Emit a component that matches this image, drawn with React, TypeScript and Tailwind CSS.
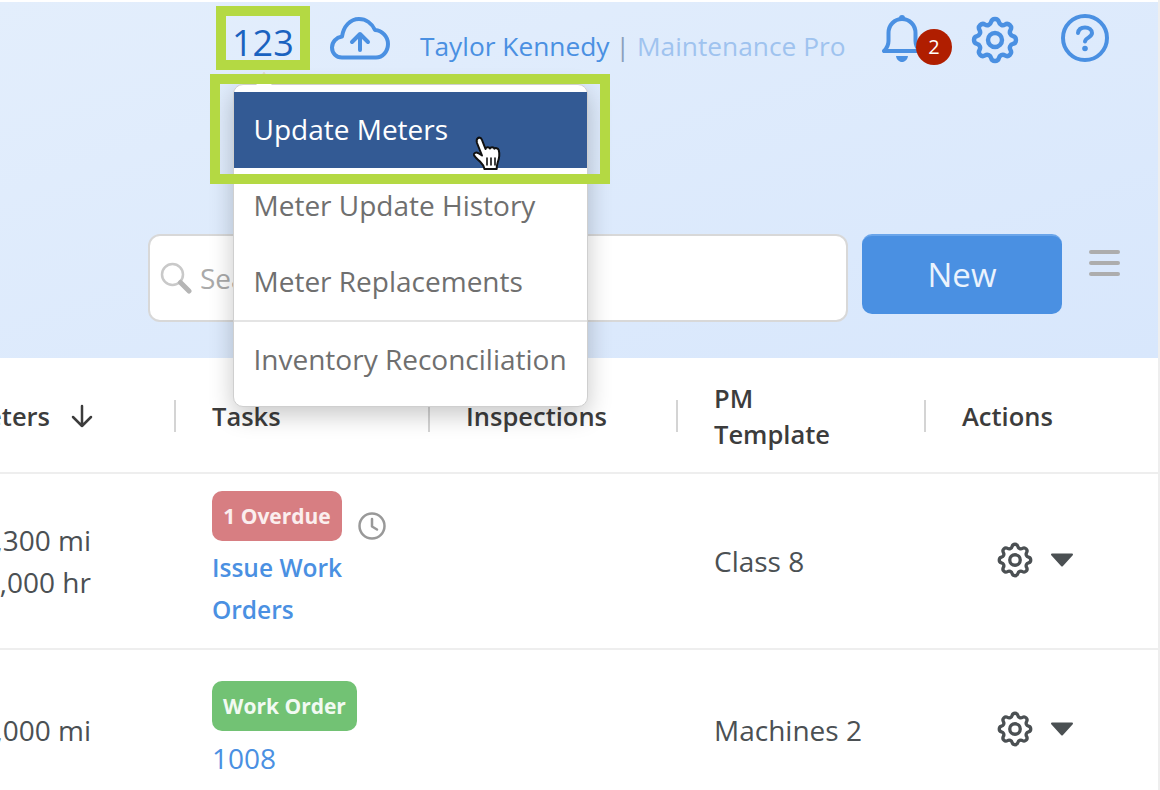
import { TbSettings } from 'react-icons/tb'

const font = { fontFamily: '"Open Sans", sans-serif' }

function CloudIcon() {
  return (
    <svg width="60" height="43" viewBox="0 0 60 43" fill="none" stroke="#4a90e2" strokeWidth="4" strokeLinecap="round" strokeLinejoin="round">
      <path d="M12 40.500C6 40.500 2 36 2 30.500 2 25 6 20.500 12 19.500 13.500 9.500 20 2 29 2c7 0 13 4.500 16 11 7 .5 13 6.500 13 14 0 7.500-5.500 13.500-12 13.500z" />
      <path d="M30 33V17M22 25l8-8 8 8" />
    </svg>
  )
}

function BellIcon() {
  return (
    <svg width="40" height="50" viewBox="0 0 40 50" fill="none">
      <circle cx="20" cy="4" r="3" fill="#4a90e2" />
      <path d="M2 37h36c-3-3-4.500-6-4.500-10v-8C33.500 11 27.500 5 20 5S6.500 11 6.500 19v8C6.500 31 5 34 2 37z" stroke="#4a90e2" strokeWidth="4" strokeLinejoin="round" />
      <path d="M14 42h12c-.5 3.500-3 6-6 6s-5.500-2.500-6-6z" fill="#4a90e2" />
    </svg>
  )
}

function HelpIcon() {
  return (
    <svg width="48" height="48" viewBox="0 0 48 48" fill="none" stroke="#4a90e2" strokeWidth="4" strokeLinecap="round">
      <circle cx="24" cy="24" r="22" />
      <path d="M17 19c.5-3.500 3.300-5.500 7-5.500 4 0 7 2.300 7 5.500 0 4.500-6.500 4.500-7 8.500" />
      <circle cx="24" cy="34.500" r="2.800" fill="#4a90e2" stroke="none" />
    </svg>
  )
}

function SearchIcon() {
  return (
    <svg width="32" height="32" viewBox="0 0 32 32" fill="none">
      <circle cx="12.500" cy="12.500" r="10.500" stroke="#c9c9c9" strokeWidth="2.500" />
      <path d="M20.500 20.500L29 29" stroke="#b5b5b5" strokeWidth="5" strokeLinecap="round" />
    </svg>
  )
}

function ClockIcon() {
  return (
    <svg width="28" height="28" viewBox="0 0 28 28" fill="none" stroke="#999999" strokeWidth="2.500" strokeLinecap="round" strokeLinejoin="round">
      <circle cx="14" cy="14" r="12.500" />
      <path d="M14 7v7.500l5 3" />
    </svg>
  )
}

function HandCursor() {
  return (
    <svg width="32" height="38" viewBox="0 0 32 38">
      <path
        d="M5.500 3.500c1.500-1.500 3.500-1 4.300 1l3.700 9.500c.3-2 3.500-2.500 4.500-.5.500-1.500 3.500-1.800 4.500.2.800-1 3.500-.8 4.200 1.300 1 3.500.7 8-1 12.500-.8 2.500-1 4-1 6.500H12.500c-.5-3-2-5-4.500-7.500C5.500 24 2.500 22 2 20c-.4-2 2-3 4-2l4 2.500L5 8c-.5-1.800-.5-3.500.5-4.500z"
        fill="#ffffff"
        stroke="#111111"
        strokeWidth="2"
        strokeLinejoin="round"
      />
      <path d="M15 23v7M19 23v7M23 23v7" stroke="#111111" strokeWidth="1.600" strokeLinecap="round" />
    </svg>
  )
}

function RowActions() {
  return (
    <div className="flex items-center gap-[14px] pl-[68px]">
      <TbSettings className="text-[#4b5053]" size={42} strokeWidth={1.9} />
      <svg width="24" height="14" viewBox="0 0 24 14">
        <path d="M2 1.500h20L12 12.500z" fill="#4b5053" stroke="#4b5053" strokeWidth="2" strokeLinejoin="round" />
      </svg>
    </div>
  )
}

const grid = 'grid grid-cols-[176px_254px_248px_248px_232px]'

export default function App() {
  return (
    <div className="relative w-[1160px] h-[790px] overflow-hidden bg-white border-r-2 border-[#eeeeee] pt-[2px]" style={font}>
      <header className="h-[356px] bg-gradient-to-br from-[#e3eefc] to-[#d8e7fc] flex flex-col">
        <div className="flex items-start h-[72px] pl-[232px]">
          <span className="mt-[23px] text-[36px] leading-none font-medium text-[#1a62c0] w-[98px]">123</span>
          <div className="mt-[15px]">
            <CloudIcon />
          </div>
          <span className="ml-[30px] mt-[26px] text-[26.3px] leading-[36px] text-[#4a90e2] whitespace-nowrap">Taylor Kennedy</span>
          <span className="ml-[6px] mr-[7px] mt-[26px] text-[26.3px] leading-[36px] text-[#8a9fbd]">|</span>
          <span className="mt-[26px] text-[26.3px] leading-[36px] text-[#9fc3ef] whitespace-nowrap w-[245px]">Maintenance Pro</span>
          <div className="relative mt-[12px] w-[85px]">
            <BellIcon />
            <span className="absolute left-[34px] top-[15px] w-[36px] h-[36px] rounded-full bg-[#b01e00] text-white text-[20px] flex items-center justify-center">2</span>
          </div>
          <TbSettings className="mt-[10px] text-[#4a90e2]" size={56} strokeWidth={1.9} />
          <div className="mt-[12px] ml-[38px]">
            <HelpIcon />
          </div>
        </div>
        <div className="flex items-start mt-[160px] pl-[148px]">
          <div className="w-[700px] h-[88px] bg-white border-2 border-[#d8d8d8] rounded-[12px] flex items-center pl-[10px] gap-[8px]">
            <SearchIcon />
            <span className="text-[28px] text-[#aaaaaa]">Search</span>
          </div>
          <button className="ml-[14px] w-[200px] h-[80px] rounded-[10px] border-t-2 border-[#6aa5ea] bg-[#4a90e2] text-[#eaf3fd] text-[33px] font-medium">New</button>
          <div className="ml-[27px] mt-[16px] w-[31px] flex flex-col gap-[7px]">
            <div className="h-[4px] rounded-full bg-[#adadad]" />
            <div className="h-[4px] rounded-full bg-[#adadad]" />
            <div className="h-[4px] rounded-full bg-[#adadad]" />
          </div>
        </div>
      </header>

      <div className={`${grid} h-[116px] pt-[2px] items-center border-b-2 border-[#eeeeee] text-[25.5px] font-semibold text-[#3c3c3c]`}>
        <div className="relative h-[32px] flex items-center justify-end overflow-hidden whitespace-nowrap border-r-2 border-[#d4d4d4] pr-[124px]">
          <span>Meters</span>
          <svg className="absolute left-[70px] top-[4px]" width="24" height="24" viewBox="0 0 24 24" fill="none" stroke="#3c3c3c" strokeWidth="2.500" strokeLinecap="round" strokeLinejoin="round">
            <path d="M12 2v20M3 13l9 9 9-9" />
          </svg>
        </div>
        <div className="h-[32px] flex items-center pl-[36px] border-r-2 border-[#d4d4d4]">Tasks</div>
        <div className="h-[32px] flex items-center pl-[36px] border-r-2 border-[#d4d4d4]">Inspections</div>
        <div className="relative h-[32px] flex items-center pl-[36px] border-r-2 border-[#d4d4d4] leading-[36px]">
          <span className="absolute left-[36px] -top-[20px] w-[150px]">PM Template</span>
        </div>
        <div className="h-[32px] flex items-center pl-[36px]">Actions</div>
      </div>

      <div className={`${grid} h-[176px] border-b-2 border-[#eeeeee] text-[#4b5053] text-[28px]`}>
        <div className="w-[91px] flex flex-col items-end justify-center overflow-hidden whitespace-nowrap leading-[42px]">
          <span>1,300 mi</span>
          <span>2,000 hr</span>
        </div>
        <div className="col-span-1 pl-[36px] pt-[17px]">
          <div className="flex items-start">
            <span className="h-[50px] w-[130px] pt-[2px] rounded-[10px] bg-[#d77e82] text-[#fbeeee] text-[21px] font-bold flex items-center justify-center">1 Overdue</span>
            <div className="ml-[16px] mt-[21px]">
              <ClockIcon />
            </div>
          </div>
          <div className="mt-[6px] w-[150px] text-[#4a90e2] text-[24.5px] font-semibold leading-[42px]">Issue Work Orders</div>
        </div>
        <div />
        <div className="pl-[36px] pt-[66px] leading-[42px]">Class 8</div>
        <div className="pt-[65px]">
          <RowActions />
        </div>
      </div>

      <div className={`${grid} h-[140px] text-[#4b5053] text-[28px]`}>
        <div className="w-[91px] flex justify-end overflow-hidden whitespace-nowrap pt-[59px] leading-[42px]">
          <span>2,000 mi</span>
        </div>
        <div className="pl-[36px] pt-[31px]">
          <span className="h-[50px] w-[145px] pt-[2px] rounded-[10px] bg-[#72c274] text-[#f2faf2] text-[21px] font-bold flex items-center justify-center">Work Order</span>
          <div className="mt-[6px] text-[#4a90e2] leading-[42px]">1008</div>
        </div>
        <div />
        <div className="pl-[36px] pt-[59px] leading-[42px] whitespace-nowrap">Machines 2</div>
        <div className="pt-[58px]">
          <RowActions />
        </div>
      </div>

      {/* dropdown menu */}
      <div className="absolute left-[233px] top-[84px] w-[355px] h-[323px] bg-white rounded-[10px] border border-[#cfcfcf] shadow-[0_8px_24px_rgba(0,0,0,0.22)] pt-[7px] text-[28px] text-[#6f6f6f]">
        <div className="absolute left-[23px] -top-[10px] w-[14px] h-[14px] rotate-45 bg-white border-l border-t border-[#cfcfcf]" />
        <div className="relative h-[76px] bg-[#335a94] text-white flex items-center pl-[19.500px] pb-[2px]">Update Meters</div>
        <div className="h-[76px] flex items-center pl-[19.500px] pb-[2px]">Meter Update History</div>
        <div className="h-[76px] flex items-center pl-[19.500px] pb-[2px]">Meter Replacements</div>
        <div className="h-[2px] bg-[#e4e4e4]" />
        <div className="h-[76px] flex items-center pl-[19.500px] pb-[2px] whitespace-nowrap">Inventory Reconciliation</div>
      </div>

      {/* callout boxes */}
      <div className="absolute left-[216px] top-[6px] w-[94px] h-[64px] border-[10px] border-[#b4d943]" />
      <div className="absolute left-[210px] top-[74px] w-[400px] h-[110px] border-[10px] border-[#b4d943]" />
      <div className="absolute left-[472px] top-[135px]">
        <HandCursor />
      </div>
    </div>
  )
}
